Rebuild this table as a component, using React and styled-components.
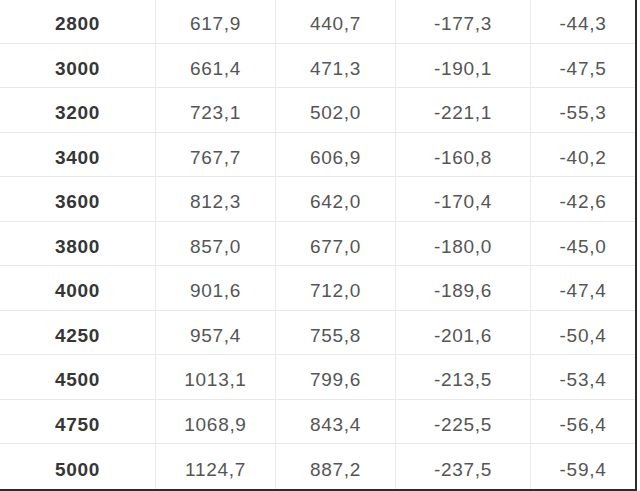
import React from "react";
import styled, { createGlobalStyle } from "styled-components";

const rows = [
  ["2800", "617,9", "440,7", "-177,3", "-44,3"],
  ["3000", "661,4", "471,3", "-190,1", "-47,5"],
  ["3200", "723,1", "502,0", "-221,1", "-55,3"],
  ["3400", "767,7", "606,9", "-160,8", "-40,2"],
  ["3600", "812,3", "642,0", "-170,4", "-42,6"],
  ["3800", "857,0", "677,0", "-180,0", "-45,0"],
  ["4000", "901,6", "712,0", "-189,6", "-47,4"],
  ["4250", "957,4", "755,8", "-201,6", "-50,4"],
  ["4500", "1013,1", "799,6", "-213,5", "-53,4"],
  ["4750", "1068,9", "843,4", "-225,5", "-56,4"],
  ["5000", "1124,7", "887,2", "-237,5", "-59,4"],
];

const GlobalStyle = createGlobalStyle`
  html, body {
    margin: 0;
    padding: 0;
    background: #ffffff;
    overflow: hidden;
  }
  body {
    font-family: "Liberation Sans", Arial, sans-serif;
  }
`;

const Page = styled.div`
  width: 640px;
  height: 491px;
  overflow: hidden;
  background: #ffffff;
`;

const Table = styled.div`
  margin-top: -1px;
  width: 635px;
  display: grid;
  grid-template-columns: 156px 120px 120px 135px 104px;
  grid-auto-rows: 44.5px;
  border-right: 2px solid #2b2b2b;
  border-bottom: 2px solid #2b2b2b;
`;

const Cell = styled.div`
  display: flex;
  align-items: center;
  justify-content: center;
  padding-top: 7px;
  box-sizing: border-box;
  border-right: ${(p) => (p.last ? "none" : "1px solid #e9e9e9")};
  border-bottom: ${(p) => (p.bottom ? "none" : "1px solid #e9e9e9")};
  font-size: 19px;
  letter-spacing: 0.7px;
  font-weight: ${(p) => (p.head ? 700 : 400)};
  color: ${(p) => (p.head ? "#363636" : "#555555")};
`;

export default function App() {
  return (
    <Page>
      <GlobalStyle />
      <Table>
        {rows.map((row, r) =>
          row.map((val, c) => (
            <Cell
              key={`${r}-${c}`}
              head={c === 0}
              last={c === row.length - 1}
              bottom={r === rows.length - 1}
            >
              {val}
            </Cell>
          ))
        )}
      </Table>
    </Page>
  );
}
